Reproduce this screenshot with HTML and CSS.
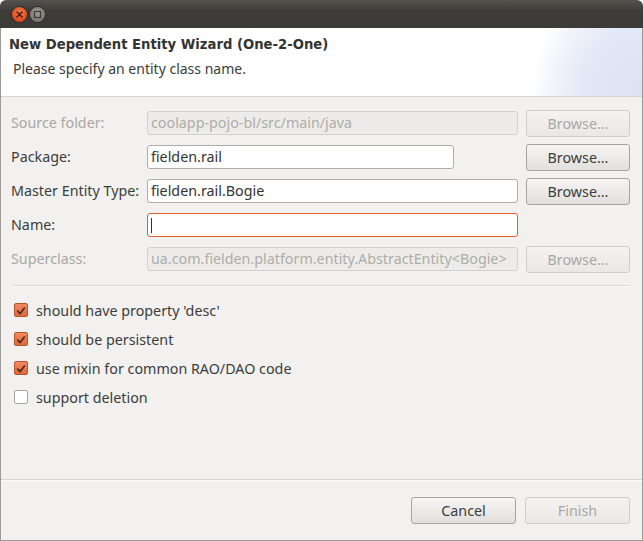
FILE: index.html
```html
<!DOCTYPE html>
<html>
<head>
<meta charset="utf-8">
<link rel="stylesheet" href="styles.css">
</head>
<body>
<div class="window">
  <div class="titlebar">
    <span class="wbtn close"><svg width="15" height="15" viewBox="0 0 15 15"><path d="M5 5 L10 10 M10 5 L5 10" stroke="#3a1a10" stroke-width="1.4" stroke-linecap="round"/></svg></span>
    <span class="wbtn max"><svg width="15" height="15" viewBox="0 0 15 15"><rect x="4.5" y="4.5" width="6" height="6" fill="none" stroke="#3c3b37" stroke-width="1.2"/></svg></span>
  </div>
  <div class="frame">
    <div class="header">
      <div class="h-title">New Dependent Entity Wizard (One-2-One)</div>
      <div class="h-sub">Please specify an entity class name.</div>
    </div>
    <div class="content">
      <div class="form">
        <div class="label disabled">Source folder:</div>
        <div class="field disabled">coolapp-pojo-bl/src/main/java</div>
        <div class="btn disabled">Browse...</div>

        <div class="label">Package:</div>
        <div class="fieldcell"><div class="field short">fielden.rail</div></div>
        <div class="btn">Browse...</div>

        <div class="label">Master Entity Type:</div>
        <div class="field">fielden.rail.Bogie</div>
        <div class="btn">Browse...</div>

        <div class="label">Name:</div>
        <div class="field focus"><span class="caret"></span></div>
        <div class="empty"></div>

        <div class="label disabled">Superclass:</div>
        <div class="field disabled">ua.com.fielden.platform.entity.AbstractEntity&lt;Bogie&gt;</div>
        <div class="btn disabled">Browse...</div>
      </div>
      <div class="sep"></div>
      <div class="checks">
        <div class="check"><span class="box on"><svg width="14" height="14" viewBox="0 0 14 14"><path d="M3.2 7.2 L6 10 L11 3.6" fill="none" stroke="#4a2a20" stroke-width="2" stroke-linecap="round" stroke-linejoin="round"/></svg></span>should have property 'desc'</div>
        <div class="check"><span class="box on"><svg width="14" height="14" viewBox="0 0 14 14"><path d="M3.2 7.2 L6 10 L11 3.6" fill="none" stroke="#4a2a20" stroke-width="2" stroke-linecap="round" stroke-linejoin="round"/></svg></span>should be persistent</div>
        <div class="check"><span class="box on"><svg width="14" height="14" viewBox="0 0 14 14"><path d="M3.2 7.2 L6 10 L11 3.6" fill="none" stroke="#4a2a20" stroke-width="2" stroke-linecap="round" stroke-linejoin="round"/></svg></span>use mixin for common RAO/DAO code</div>
        <div class="check"><span class="box"></span>support deletion</div>
      </div>
    </div>
    <div class="footer">
      <div class="btn fbtn">Cancel</div>
      <div class="btn fbtn disabled">Finish</div>
    </div>
  </div>
</div>
</body>
</html>
```
FILE: styles.css
```css
html, body {
  margin: 0;
  padding: 0;
  background: #ffffff;
}
body {
  font-family: "Noto Sans", "DejaVu Sans", sans-serif;
  font-size: 14.3px;
  color: #3c3c3c;
}
.window {
  width: 643px;
  height: 541px;
  display: flex;
  flex-direction: column;
}
.titlebar {
  height: 28px;
  flex: 0 0 28px;
  background: linear-gradient(#55534e, #3d3c38 40%, #3c3b37);
  border-radius: 6px 6px 0 0;
  display: flex;
  align-items: center;
  padding-left: 12px;
  gap: 3px;
  box-sizing: border-box;
  padding-top: 1px;
}
.wbtn {
  width: 15px;
  height: 15px;
  border-radius: 50%;
  display: flex;
  align-items: center;
  justify-content: center;
}
.wbtn.close {
  background: radial-gradient(circle at 50% 35%, #f27a4c, #df4b1c 70%, #c43e14);
  box-shadow: 0 0 0 1px #2f2e2b;
}
.wbtn.max {
  background: radial-gradient(circle at 50% 35%, #9c9a94, #7b7974 70%, #6a6864);
  box-shadow: 0 0 0 1px #2f2e2b;
}
.frame {
  flex: 1;
  display: flex;
  flex-direction: column;
  border: 1px solid #9d9b97;
  border-top: none;
  background: #f2f1f0;
}
.header {
  height: 69px;
  flex: 0 0 69px;
  background: #ffffff radial-gradient(ellipse 120px 140px at 100% 100%, #dce2f3 0%, #e3e8f6 50%, #f2f4fb 75%, #ffffff 92%);
  border-bottom: 1px solid #d8d6d2;
  box-sizing: border-box;
  padding: 9px 0 0 8px;
}
.h-title {
  font-family: "DejaVu Sans", sans-serif;
  font-weight: bold;
  font-size: 13.2px;
  color: #333333;
  line-height: 16px;
}
.h-sub {
  margin-top: 6px;
  padding-left: 4px;
  font-size: 14px;
  line-height: 20px;
}
.content {
  flex: 1;
  padding: 13px 12px 0 10px;
}
.form {
  display: grid;
  grid-template-columns: 128px 371px 104px;
  grid-auto-rows: 26px;
  column-gap: 8px;
  row-gap: 8px;
  align-items: center;
}
.label {
  line-height: 26px;
  white-space: nowrap;
}
.disabled {
  color: #aaa8a4;
}
.field {
  height: 24px;
  box-sizing: border-box;
  border: 1px solid #b0ada8;
  border-radius: 3px;
  background: #ffffff;
  padding: 0 3px;
  line-height: 22px;
  color: #333333;
  white-space: nowrap;
  overflow: hidden;
}
.field.disabled {
  background: #edecea;
  border-color: #d3d1cd;
  color: #aeaca8;
}
.field.short {
  width: 307px;
}
.field.focus {
  border-color: #e45e2a;
  display: flex;
  align-items: center;
}
.caret {
  display: block;
  width: 1px;
  height: 15px;
  background: #333333;
}
.btn {
  height: 27px;
  box-sizing: border-box;
  border: 1px solid #a8a5a0;
  border-radius: 3px;
  background: linear-gradient(#f6f5f4, #e2e0dd);
  display: flex;
  align-items: center;
  justify-content: center;
  color: #3c3c3c;
}
.btn.disabled {
  border-color: #cfcdc9;
  background: linear-gradient(#f4f3f2, #e9e8e6);
  color: #aaa8a4;
}
.sep {
  height: 1px;
  background: #d8d6d2;
  border-bottom: 1px solid #fbfbfa;
  margin: 13px 0 0 1px;
}
.checks {
  margin-top: 13px;
  display: flex;
  flex-direction: column;
  gap: 9px;
  padding-left: 3px;
}
.check {
  display: flex;
  align-items: center;
  height: 20px;
  gap: 8px;
}
.box {
  width: 14px;
  height: 14px;
  box-sizing: border-box;
  border: 1px solid #a9a6a1;
  border-radius: 2px;
  background: #ffffff;
  display: flex;
}
.box.on {
  border-color: #b5532f;
  background: linear-gradient(#f08a5f, #de6a3c);
}
.footer {
  flex: 0 0 61px;
  border-top: 1px solid #d8d6d2;
  box-shadow: inset 0 1px 0 #fbfbfa;
  display: flex;
  justify-content: flex-end;
  align-items: flex-start;
  padding: 17px 12px 0 0;
  gap: 9px;
  box-sizing: border-box;
}
.fbtn {
  width: 105px;
}
```
